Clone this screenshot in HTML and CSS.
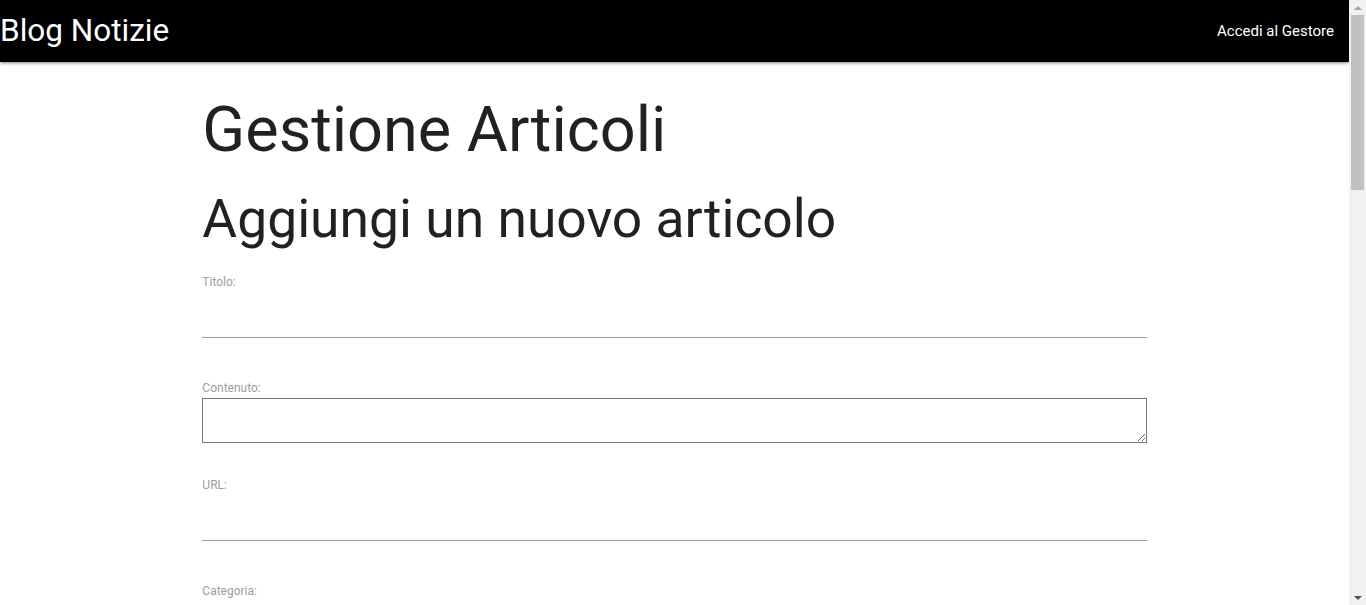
FILE: index.html
```html
<!DOCTYPE html>
<html lang="it">
<head>
<meta charset="utf-8">
<title>Blog Notizie - Gestione Articoli</title>
<link rel="stylesheet" href="styles.css">
</head>
<body>
<nav class="navbar">
  <a class="brand" href="#">Blog Notizie</a>
  <ul class="nav-links">
    <li><a href="#">Accedi al Gestore</a></li>
  </ul>
</nav>
<main class="container">
  <h1 class="title">Gestione Articoli</h1>
  <h2 class="subtitle">Aggiungi un nuovo articolo</h2>
  <form class="article-form">
    <div class="field">
      <label class="field-label" for="titolo">Titolo:</label>
      <input class="text-input" type="text" id="titolo">
    </div>
    <div class="field">
      <label class="field-label" for="contenuto">Contenuto:</label>
      <textarea class="text-area" id="contenuto"></textarea>
    </div>
    <div class="field">
      <label class="field-label" for="url">URL:</label>
      <input class="text-input" type="text" id="url">
    </div>
    <div class="field">
      <label class="field-label" for="categoria">Categoria:</label>
      <input class="text-input" type="text" id="categoria">
    </div>
    <div class="field">
      <label class="field-label" for="autore">Autore:</label>
      <input class="text-input" type="text" id="autore">
    </div>
    <div class="actions">
      <button class="btn" type="button">Aggiungi</button>
    </div>
  </form>
  <h2 class="subtitle">Elenco articoli</h2>
  <ul class="article-list">
    <li class="article-item">Nessun articolo presente.</li>
  </ul>
</main>
<div class="scrollbar" aria-hidden="true">
  <div class="sb-button"><span class="arrow-up"></span></div>
  <div class="sb-track"><div class="sb-thumb"></div></div>
  <div class="sb-button"><span class="arrow-down"></span></div>
</div>
</body>
</html>
```

FILE: styles.css
```css
html {
  font-family: Roboto, "Noto Sans", sans-serif;
  font-size: 15px;
  line-height: 1.5;
  color: rgba(0, 0, 0, 0.87);
}

body {
  margin: 0 17px 0 0;
  background: #fff;
}

.scrollbar {
  position: fixed;
  top: 0;
  right: 0;
  width: 17px;
  height: 100vh;
  background: #f1f1f1;
  display: flex;
  flex-direction: column;
}

.sb-button {
  height: 15px;
  display: flex;
  align-items: center;
  justify-content: center;
}

.arrow-up {
  width: 0;
  height: 0;
  border-left: 4px solid transparent;
  border-right: 4px solid transparent;
  border-bottom: 4px solid #a3a3a3;
}

.arrow-down {
  width: 0;
  height: 0;
  border-left: 4px solid transparent;
  border-right: 4px solid transparent;
  border-top: 4px solid #505050;
}

.sb-track {
  flex: 1;
  padding: 0 2px;
}

.sb-thumb {
  height: 175px;
  background: #c1c1c1;
}

.navbar {
  height: 62px;
  background: #000;
  display: flex;
  align-items: center;
  justify-content: space-between;
  box-shadow: 0 2px 2px 0 rgba(0,0,0,0.14), 0 3px 1px -2px rgba(0,0,0,0.12), 0 1px 5px 0 rgba(0,0,0,0.2);
}

.brand {
  color: #fff;
  text-decoration: none;
  font-size: 31.5px;
  line-height: 62px;
}

.nav-links {
  list-style: none;
  margin: 0;
  padding: 0;
  display: flex;
}

.nav-links a {
  color: #fff;
  text-decoration: none;
  font-size: 15px;
  padding: 0 15px;
  line-height: 60px;
  display: block;
}

.container {
  width: 70%;
  margin: 0 auto;
  min-height: 1913px;
}

.title {
  font-size: 63px;
  font-weight: 400;
  line-height: 110%;
  margin: 33px 0 0;
}

.subtitle {
  font-size: 53.4px;
  font-weight: 400;
  line-height: 110%;
  margin: 26px 0 24px;
}

.article-form {
  display: flex;
  flex-direction: column;
  gap: 33px;
}

.field {
  display: flex;
  flex-direction: column;
}

.field-label {
  font-size: 12px;
  line-height: 19px;
  color: #9e9e9e;
}

.text-input {
  height: 45px;
  padding: 0;
  margin: 0 0 8px;
  border: none;
  border-bottom: 1px solid #9e9e9e;
  outline: none;
  background: transparent;
  font: inherit;
  box-sizing: content-box;
}

.text-area {
  height: 45px;
  box-sizing: border-box;
  border: 1px solid #767676;
  background: transparent;
  padding: 2px;
  font: inherit;
  margin: 0;
}

.actions {
  display: flex;
}

.btn {
  background: #000;
  color: #fff;
  border: none;
  border-radius: 2px;
  height: 36px;
  padding: 0 16px;
  font: inherit;
  text-transform: uppercase;
}

.article-list {
  list-style: none;
  padding: 0;
  margin: 0;
}

.article-item {
  padding: 10px 0;
  color: #9e9e9e;
}
```
